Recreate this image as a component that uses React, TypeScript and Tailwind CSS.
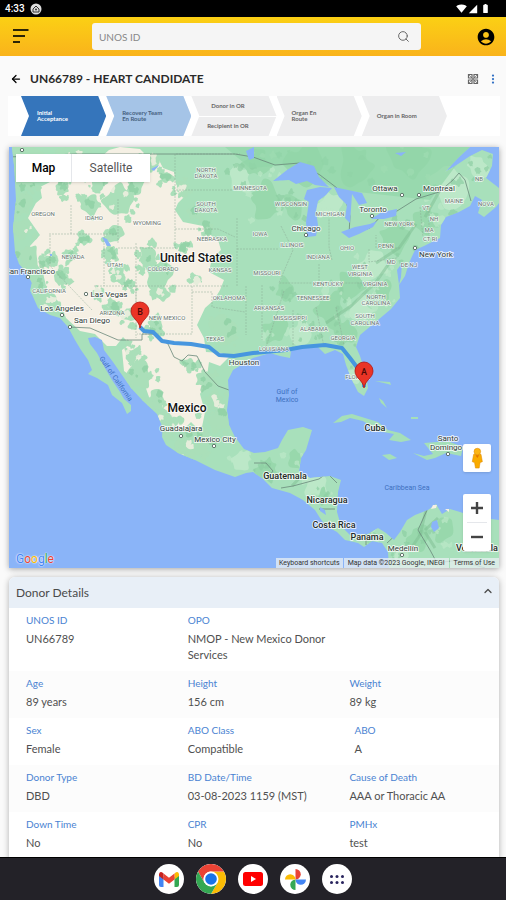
import React from "react";
import { ArrowLeft, ChevronUp, MoreVertical, Search } from "lucide-react";
import { MdAccountCircle, MdBatteryFull, MdSignalCellular4Bar, MdSignalWifi4Bar } from "react-icons/md";

type Point = [number, number];

function noise(n: number): number {
  return Math.abs(Math.sin(n * 12.9898) * 43758.5453) % 1;
}

/* Irregular rounded blotch around a centre, stable for a given seed. */
function patch(x: number, y: number, r: number, seed: number): string {
  const pts: Point[] = [];
  for (let i = 0; i < 14; i++) {
    const d = r * (0.45 + noise(seed * 3.1 + i * 7.7) * 0.75);
    const a = (i / 14) * Math.PI * 2;
    pts.push([x + Math.cos(a) * d, y + Math.sin(a) * d * 1.1]);
  }
  const mid = (i: number): string => {
    const [a, b] = [pts[i % 14], pts[(i + 1) % 14]];
    return `${((a[0] + b[0]) / 2).toFixed(1)} ${((a[1] + b[1]) / 2).toFixed(1)}`;
  };
  return `M${mid(13)}` + pts.map(([a, b], i) => `Q${a.toFixed(1)} ${b.toFixed(1)} ${mid(i)}`).join("") + "Z";
}

/* Small flecks scattered over a disc. */
function flecks(x: number, y: number, r: number, seed: number, count: number): string {
  let d = "";
  for (let i = 0; i < count; i++) {
    const a = noise(seed + i * 5.3) * Math.PI * 2;
    const k = r * (0.3 + noise(seed * 2 + i * 9.1) * 1.1);
    d += patch(x + Math.cos(a) * k, y + Math.sin(a) * k, 1.5 + noise(seed + i) * 3, seed + i * 11);
  }
  return d;
}

const MAINLAND =
  "M12 147L14 165 16 200 13 228 15 252 19 264 27 273 32 283 30 290 38 308 50 315 60 318 68 327 75 340 81 350 88 360 92 370 88 374 97 378 108 385 112 395 122 403 127 414 131 411 131 405 124 399 120 392 112 380 105 368 97 353 90 344 88 338 95 337 102 340 104 350 113 362 122 375 131 388 143 401 157 414 163 428 162 437 166 445 178 453 195 460 215 470 235 477 246 473 253 472 262 478 272 488 290 493 303 500 315 510 320 518 326 526 337 532 345 540 358 543 364 547 372 541 382 543 388 552 389 568 499 568 499 520 475 517 460 512 450 509 442 514 436 504 428 510 415 515 407 520 400 532 394 540 386 533 378 528 368 534 350 535 341 526 337 512 338 492 341 480 330 476 310 478 299 471 301 458 306 450 312 430 303 427 288 430 282 440 278 448 265 452 254 453 244 449 235 437 229 425 227 410 229 395 228 380 233 370 243 364 253 358 270 353 280 356 290 358 291 351 300 348 318 347 325 354 335 350 343 354 346 365 352 380 358 392 364 396 368 388 366 375 360 356 356 347 360 335 366 330 378 320 391 309 400 298 399 285 405 276 409 263 415 250 424 246 440 238 441 225 446 217 459 212 470 206 475 196 482 200 478 213 484 217 496 207 499 203 499 188 486 178 492 166 493 154 482 150 470 156 452 168 445 172 458 158 470 147Z";

const ARID =
  "M109 150L120 147 140 149 146 155 158 158 163 168 174 172 176 184 185 196 178 203 175 210 183 222 203 226 209 234 218 240 221 250 212 258 209 272 224 280 220 290 214 300 205 308 197 325 204 338 206 352 222 353 229 357 220 366 209 362 206 383 200 394 205 412 201 432 191 422 182 431 173 430 167 411 156 402 149 397 142 377 131 376 124 371 122 350 130 344 123 337 116 346 107 346 95 334 80 331 66 318 60 303 47 290 43 273 34 260 30 246 40 235 28 218 36 203 42 198 40 187 50 182 48 170 60 178 77 176 94 166 100 158Z";

const FOREST: [number, number, number][] = [
  [25, 155, 20], [25, 180, 12], [22, 205, 12], [22, 230, 12], [28, 257, 13], [37, 281, 9], [75, 160, 22], [100, 178, 14],
  [90, 204, 11], [118, 200, 16], [115, 235, 9], [135, 185, 9], [150, 163, 9], [166, 177, 7], [111, 254, 7],
  [119, 275, 9], [147, 257, 11], [159, 275, 14], [162, 293, 9], [155, 327, 8], [115, 307, 8], [130, 314, 10], [47, 262, 8],
  [61, 278, 8], [49, 302, 9], [71, 256, 6], [83, 240, 5], [131, 356, 11], [140, 375, 13], [157, 400, 11], [168, 424, 14],
  [190, 365, 7], [205, 380, 10], [215, 401, 11], [219, 420, 15], [199, 443, 17], [186, 449, 12], [183, 248, 6], [62, 188, 8],
  [182, 189, 8], [196, 214, 7], [208, 228, 6], [196, 281, 6], [222, 330, 15], [131, 284, 6], [97, 293, 5],
];

const WOODS: [number, number, number][] = [
  [240, 178, 15], [267, 201, 20], [292, 207, 12], [330, 205, 15], [355, 165, 22], [410, 160, 25], [448, 188, 21], [426, 220, 16],
  [395, 240, 18], [373, 265, 17], [350, 286, 19], [330, 309, 18], [302, 334, 15], [276, 331, 15], [286, 289, 12], [362, 311, 14],
  [300, 164, 21], [256, 164, 16], [477, 165, 13], [297, 458, 10], [267, 469, 13], [315, 486, 14], [419, 538, 12], [443, 530, 12],
  [403, 556, 10], [371, 537, 7], [323, 496, 8], [242, 459, 11], [345, 333, 12], [383, 291, 11], [352, 377, 8],
];

const STATES: [string, number, number][] = [
  ["OREGON", 43, 216], ["IDAHO", 94, 220], ["WYOMING", 147, 225], ["NEVADA", 73, 259], ["UTAH", 115, 267],
  ["COLORADO", 163, 271], ["NEBRASKA", 212, 241], ["KANSAS", 220, 272], ["CALIFORNIA", 49, 293], ["ARIZONA", 112, 315],
  ["NEW MEXICO", 167, 320], ["OKLAHOMA", 229, 300], ["TEXAS", 215, 341], ["NORTH", 206, 172], ["DAKOTA", 206, 178],
  ["SOUTH", 206, 206], ["DAKOTA", 206, 212], ["MINNESOTA", 250, 190], ["WISCONSIN", 291, 206], ["MICHIGAN", 330, 216],
  ["IOWA", 260, 236], ["ILLINOIS", 292, 247], ["INDIANA", 318, 259], ["OHIO", 347, 250], ["MISSOURI", 267, 275],
  ["WEST", 360, 269], ["VIRGINIA", 360, 276], ["KENTUCKY", 328, 286], ["VIRGINIA", 375, 286], ["TENNESSEE", 313, 300],
  ["NORTH", 376, 299], ["CAROLINA", 376, 305], ["ARKANSAS", 269, 310], ["MISSISSIPPI", 290, 320], ["SOUTH", 365, 318],
  ["CAROLINA", 365, 325], ["ALABAMA", 314, 331], ["GEORGIA", 343, 340], ["LOUISIANA", 274, 351], ["FLORIDA", 357, 379],
  ["NEW YORK", 399, 226], ["PENN", 386, 248], ["MAINE", 454, 203], ["VT", 426, 210], ["NH", 434, 221], ["MA", 429, 232],
  ["CT RI", 430, 241], ["MD", 391, 264], ["DE NJ", 409, 267], ["NB", 479, 181], ["NOVA", 486, 206],
];

const CITIES: [string, number, number][] = [
  ["San Francisco", 30, 274], ["Las Vegas", 109, 297], ["Los Angeles", 62, 311], ["San Diego", 92, 323], ["Houston", 244, 365],
  ["Guadalajara", 181, 431], ["Mexico City", 215, 442], ["Chicago", 306, 231], ["Toronto", 373, 212], ["Ottawa", 385, 191],
  ["Montreal", 439, 191], ["New York", 436, 257], ["Santo", 448, 441], ["Domingo", 446, 450], ["Medellín", 403, 551],
];

const COUNTRIES: [string, number, number][] = [
  ["Cuba", 375, 431], ["Guatemala", 285, 479], ["Nicaragua", 327, 503], ["Costa Rica", 334, 528], ["Panama", 367, 540], ["Venezuela", 477, 551],
];

const DOTS: Point[] = [
  [28, 277], [86, 294], [62, 315], [70, 327], [181, 436], [214, 446], [22, 150], [306, 235], [372, 216], [402, 195], [419, 195], [415, 248], [448, 454], [402, 555],
];

const WATER = "#8ab4f8";

function Pin({ x, y, letter }: { x: number; y: number; letter: string }) {
  return (
    <g transform={`translate(${x} ${y})`}>
      <path d="M0 0C-1-8-9-10-9-17A9 9 0 1 1 9-17C9-10 1-8 0 0Z" fill="#ea3426" stroke="#b31412" strokeWidth="0.8" />
      <text y="-13" textAnchor="middle" fontSize="9" fontWeight="500" fill="#4b0905">{letter}</text>
    </g>
  );
}

function MapDrawing() {
  return (
    <svg viewBox="9 147 490 421" preserveAspectRatio="xMidYMid slice" className="block h-full w-full font-[Roboto,sans-serif]" role="img" aria-label="Route from Florida to New Mexico">
      <defs>
        <clipPath id="land"><path d={MAINLAND} /></clipPath>
      </defs>
      <rect x="9" y="147" width="490" height="421" fill={WATER} />
      <path d={MAINLAND} fill="#a8e0bb" />
      <g clipPath="url(#land)">
        {WOODS.map(([x, y, r], i) => <path key={i} d={patch(x, y, r, i + 40)} fill={i % 3 ? "#98d8ac" : "#bce8c8"} />)}
        {WOODS.map(([x, y, r], i) => <path key={i} d={flecks(x, y, r, i + 20, 6)} fill={i % 2 ? "#bce8c8" : "#8dcfa3"} opacity="0.7" />)}
        <path d="M225 147H470L430 200 340 190 285 165 250 168Z" fill="#92d6a8" opacity="0.7" />
        <path d={ARID} fill="#f5f0e4" />
        {FOREST.map(([x, y, r], i) => <path key={i} d={patch(x, y, r, i + 3)} fill="#aadfb9" />)}
        {FOREST.map(([x, y, r], i) => <path key={i} d={flecks(x, y, r, i + 5, 8)} fill="#aadfb9" />)}
        {FOREST.map(([x, y, r], i) => <path key={i} d={flecks(x, y, r * 0.6, i + 60, 3)} fill={i % 3 ? "#8fd0a4" : "#f5f0e4"} opacity="0.8" />)}
        <path d="M390 262L376 282 351 306 326 323M416 224L399 248 376 263M440 190L425 217M306 471L292 486M425 530L438 518M426 510L420 535 410 550M435 548L425 532" fill="none" stroke="#7dbd92" strokeWidth="3" opacity="0.5" />
        <path d="M176 154H240M176 190H233M175 229H218L235 237M118 248H176M49 234H118M71 205V234M118 199V243M175 154V248M104 234V286M136 243V321M94 286H228M136 286V338M192 286V334H137M192 292H212V307L245 312M237 218V286M237 249H278M246 286V335M262 285V340M281 226L293 250 279 283H362M284 291L266 347M293 310V350M316 307L324 347M336 307L344 345M319 264V282M332 260L329 247V218M369 249V262L397 258M400 248H376V235M420 207L423 237M429 205V240M50 235V266L92 310" fill="none" stroke="#8aa694" strokeWidth="0.7" strokeDasharray="2 1" opacity="0.65" />
        <path d="M9 157 75 154H235L253 157 275 165 300 163 320 175 337 188 346 201 350 216 349 235 370 228 381 216 397 211 416 199 439 192 453 180 459 173 465 180 471 201" fill="none" stroke="#69887a" strokeWidth="0.8" />
        <path d="M69 327 90 328 118 340H142V334H153L168 344 174 357 182 361 188 355 197 356 205 372 218 386 229 390M254 463H266L273 471 266 480M281 488 293 486 319 479 327 473 337 483M319 509H335M366 532V545M427 510 418 530 430 550 437 563 458 560 485 568M399 532 387 543" fill="none" stroke="#69887a" strokeWidth="0.8" />
      </g>
      <g fill={WATER}>
        <path d="M273 181L287 170 300 162 314 166 319 177 329 187 315 185 307 181 296 184 289 180Z" />
        <path d="M307 190L320 187 332 188 326 195 318 201 316 211 318 225 316 236 307 237 306 222 309 202 304 199Z" />
        <path d="M334 187L348 190 362 193 367 203 359 205 352 194 351 209 350 223 345 218 347 205 339 197Z" />
        <path d="M341 232L355 227 370 224 377 221 373 227 359 234 349 238Z" />
        <path d="M371 219L382 212 397 209 396 216 384 219Z" />
        <path d="M102 237L107 239 111 246 107 246Z" />
        <path d="M397 270L402 263 401 277 399 285Z" />
        <path d="M432 522L437 520 439 528 434 532 431 527Z" />
        <path d="M320 507L325 510 326 515 320 511Z" />
        <path d="M151 169L159 165 154 171ZM50 254H52V256H50ZM246 151L254 147 254 158 249 160ZM395 153L406 152 401 156Z" />
      </g>
      <g fill="#a5dfb9">
        <path d="M333 423L342 416 352 414 365 418 378 422 388 430 400 433 411 440 401 442 389 440 394 434 378 431 363 421 350 418 341 422Z" />
        <path d="M382 455L390 454 397 458 389 460Z" />
        <path d="M413 453L424 456 433 454 424 443 437 442 450 442 463 447 461 456 446 453 435 458 427 460Z" />
        <path d="M379 398L383 401 387 408 381 403ZM411 417H418V419H411ZM375 381L390 382 391 385 388 384ZM467 452H474V455H467Z" />
      </g>
      <path d="M433 505L437 505 436 508 431 509ZM445 509L449 509 449 512Z" fill="#f5f0e4" />
      <path d="M140 327L144 331 153 332 162 341 174 343 191 344 209 347 219 355 234 356 253 353 286 350 302 347 325 345 342 348 350 358 356 366 364 378V387" fill="none" stroke="#4796df" strokeWidth="4" strokeLinejoin="round" />
      <g fill="#fff" stroke="#52675e" strokeWidth="0.9">
        {DOTS.map(([x, y]) => <circle key={`${x}-${y}`} cx={x} cy={y} r="1.7" />)}
      </g>
      <g textAnchor="middle" stroke="#fff" strokeOpacity="0.75" paintOrder="stroke" strokeLinejoin="round">
        <g fontSize="6" fill="#68736e" strokeWidth="1.5">
          {STATES.map(([name, x, y], i) => <text key={i} x={x} y={y}>{name}</text>)}
        </g>
        <g fontSize="8" fill="#333d38" strokeWidth="2">
          {CITIES.map(([name, x, y]) => <text key={name} x={x} y={y}>{name}</text>)}
        </g>
        <g fontSize="9" fontWeight="500" fill="#252b28" strokeWidth="2">
          {COUNTRIES.map(([name, x, y]) => <text key={name} x={x} y={y}>{name}</text>)}
        </g>
        <g fontSize="12" fontWeight="500" fill="#111" strokeWidth="2">
          <text x="196" y="262">United States</text>
          <text x="187" y="412">Mexico</text>
        </g>
      </g>
      <g fontSize="7" fill="#3d70bf" textAnchor="middle">
        <text x="287" y="394">Gulf of</text>
        <text x="287" y="402">Mexico</text>
        <text x="407" y="490">Caribbean Sea</text>
        <text transform="translate(114 380) rotate(55)">Gulf of California</text>
      </g>
      <Pin x={140} y={328} letter="B" />
      <Pin x={364} y={388} letter="A" />
    </svg>
  );
}

function MapCard() {
  return (
    <section className="relative aspect-[490/421] shadow-[0_1px_6px_rgba(0,0,0,0.35)]">
      <MapDrawing />
      <div className="absolute left-[7px] top-[7px] flex h-7 bg-white text-[12px] text-[#555] font-[Roboto,sans-serif] shadow-sm">
        <button className="w-14 border-r border-gray-200 font-medium text-black">Map</button>
        <button className="w-[78px]">Satellite</button>
      </div>
      <button aria-label="Street view" className="absolute bottom-24 right-2 flex size-7 items-center justify-center rounded-xs bg-white shadow-sm">
        <svg viewBox="0 0 16 24" className="h-[22px]">
          <path d="M4 8H12L13.500 16 11 17 10 23H6L5 17 2.500 16Z" fill="#f9ab00" stroke="#e08a00" strokeWidth="0.6" />
          <path d="M6 9L8 12 10 9Z" fill="#e37400" />
          <circle cx="8" cy="5" r="3.600" fill="#fbb514" stroke="#e08a00" strokeWidth="0.6" />
        </svg>
      </button>
      <div className="absolute bottom-[17px] right-2 flex w-7 flex-col items-center rounded-xs bg-white shadow-sm">
        <button aria-label="Zoom in" className="flex h-7 w-full items-center justify-center">
          <svg viewBox="0 0 12 12" className="size-3"><path d="M6 0V12M0 6H12" stroke="#444" strokeWidth="2.400" /></svg>
        </button>
        <span className="h-px w-5 bg-gray-200" />
        <button aria-label="Zoom out" className="flex h-7 w-full items-center justify-center">
          <svg viewBox="0 0 12 12" className="size-3"><path d="M0 6H12" stroke="#444" strokeWidth="2.400" /></svg>
        </button>
      </div>
      <div aria-label="Google" className="absolute bottom-0 left-[7px] text-[12px] leading-[18px] font-[Roboto,sans-serif] [text-shadow:0_0_1px_white,0_0_2px_white]">
        <span className="text-[#4285f4]">G</span><span className="text-[#ea4335]">o</span><span className="text-[#fbbc05]">o</span><span className="text-[#4285f4]">g</span><span className="text-[#34a853]">l</span><span className="text-[#ea4335]">e</span>
      </div>
      <div className="absolute bottom-0 right-0 flex h-[10px] items-center gap-px whitespace-nowrap text-[7px] leading-[10px] text-[#333] font-[Roboto,sans-serif]">
        <button className="bg-[#e9f0f3]/75 px-[3px]">Keyboard shortcuts</button>
        <span className="bg-[#e9f0f3]/75 px-1">Map data ©2023 Google, INEGI</span>
        <a href="#terms" className="bg-[#e9f0f3]/75 px-1">Terms of Use</a>
      </div>
    </section>
  );
}

const STEP =
  "flex w-1/5 flex-col justify-center [clip-path:polygon(0_0,calc(100%-8px)_0,100%_50%,calc(100%-8px)_100%,0_100%,8px_50%)]";

function Steps() {
  return (
    <ol className="flex h-10 shrink-0 bg-white pl-[13px] pr-[53px] text-[6px] font-bold leading-[6px] text-[#666]">
      <li className={`${STEP} bg-[#3575bb] pl-4 text-white`}>Initial<br />Acceptance</li>
      <li className={`${STEP} bg-[#a5c4e7] pl-4 text-[#46617f]`}>Recovery Team<br />En Route</li>
      <li className={`${STEP} text-center`}>
        <span className="flex flex-1 items-center justify-center bg-[#ededee] pr-3">Donor in OR</span>
        <span className="h-px bg-white" />
        <span className="flex flex-1 items-center justify-center bg-[#ededee] pr-3">Recipient in OR</span>
      </li>
      <li className={`${STEP} bg-[#ededee] pl-[15px]`}>Organ En<br />Route</li>
      <li className={`${STEP} bg-[#ededee] pl-[15px]`}>Organ in Room</li>
    </ol>
  );
}

type Field = { label: string; value: string; inset?: boolean };

const ROWS: Field[][] = [
  [{ label: "UNOS ID", value: "UN66789" }, { label: "OPO", value: "NMOP - New Mexico Donor Services" }],
  [{ label: "Age", value: "89 years" }, { label: "Height", value: "156 cm" }, { label: "Weight", value: "89 kg" }],
  [{ label: "Sex", value: "Female" }, { label: "ABO Class", value: "Compatible" }, { label: "ABO", value: "A", inset: true }],
  [{ label: "Donor Type", value: "DBD" }, { label: "BD Date/Time", value: "03-08-2023 1159 (MST)" }, { label: "Cause of Death", value: "AAA or Thoracic AA" }],
  [{ label: "Down Time", value: "No" }, { label: "CPR", value: "No" }, { label: "PMHx", value: "test" }],
];

function DonorDetails() {
  return (
    <section className="mt-[9px] rounded-t-md bg-white shadow-[0_1px_6px_rgba(0,0,0,0.3)]">
      <h2>
        <button className="flex h-[31px] w-full items-center justify-between rounded-t-md bg-[#e8eff7] pl-[7px] pr-[5px] text-[12px] text-[#4a4a4a]">
          Donor Details
          <ChevronUp className="mb-1 size-3" strokeWidth={2.5} />
        </button>
      </h2>
      {ROWS.map((row, i) => (
        <dl key={i} className="grid grid-cols-[33%_33%_1fr] pb-2 pt-1 text-[11px] leading-4 odd:bg-[#fcfcfc]">
          {row.map((f) => (
            <div key={f.label} className={f.inset ? "pl-[22px]" : "pl-[17px]"}>
              <dt className="mb-[3px] text-[10px] leading-4 text-[#4a83d2]">{f.label}</dt>
              <dd className="text-[#505050]">{f.value}</dd>
            </div>
          ))}
        </dl>
      ))}
    </section>
  );
}

function Dock() {
  const tile = "flex size-[30px] items-center justify-center overflow-hidden rounded-full bg-white";
  return (
    <nav aria-label="Apps" className="flex h-[43px] shrink-0 items-center justify-center gap-3 border-t border-black bg-[#232228]">
      <button aria-label="Gmail" className={tile}>
        <svg viewBox="0 0 20 15" className="w-5">
          <path d="M0 2V13Q0 15 2 15H4.500V5Z" fill="#4285f4" />
          <path d="M15.500 15H18Q20 15 20 13V2L15.500 5Z" fill="#34a853" />
          <path d="M15.500 1.500V7.500L20 4V2Q19-1.500 15.500 1.500Z" fill="#fbbc04" />
          <path d="M4.500 7.500V1.500L10 5.700 15.500 1.500V7.500L10 11.700Z" fill="#ea4335" />
          <path d="M0 2V4L4.500 7.500V1.500Q1-1.500 0 2Z" fill="#c5221f" />
        </svg>
      </button>
      <button aria-label="Chrome" className={tile}>
        <svg viewBox="0 0 30 30" className="size-[30px]">
          <path d="M15 7.500H28A15 15 0 0 1 15 30L21.500 18.700Z" fill="#fbbc04" />
          <path d="M2 7.500A15 15 0 0 1 28 7.500H15A7.500 7.500 0 0 0 8.500 18.700Z" fill="#ea4335" />
          <path d="M2 7.500L8.500 18.700 15 22.500 21.500 18.700 15 30A15 15 0 0 1 2 7.500Z" fill="#34a853" />
          <circle cx="15" cy="15" r="7.500" fill="#fff" />
          <circle cx="15" cy="15" r="5.800" fill="#1a73e8" />
        </svg>
      </button>
      <button aria-label="YouTube" className={tile}>
        <svg viewBox="0 0 20 14" className="w-5"><rect width="20" height="14" rx="2.500" fill="#f00" /><path d="M8 4V10L13 7Z" fill="#fff" /></svg>
      </button>
      <button aria-label="Photos" className={tile}>
        <svg viewBox="0 0 20 20" className="size-[21px]">
          <path d="M10 0A5 5 0 0 1 10 10Z" fill="#ea4335" />
          <path d="M20 10A5 5 0 0 1 10 10Z" fill="#4285f4" />
          <path d="M10 20A5 5 0 0 1 10 10Z" fill="#34a853" />
          <path d="M0 10A5 5 0 0 1 10 10Z" fill="#fbbc04" />
        </svg>
      </button>
      <button aria-label="All apps" className={tile}>
        <svg viewBox="0 0 14 9" className="w-[14px]" fill="#29245e">
          {[1.5, 7, 12.5].map((x) => <g key={x}><circle cx={x} cy="1.500" r="1.500" /><circle cx={x} cy="7.500" r="1.500" /></g>)}
        </svg>
      </button>
    </nav>
  );
}

export default function App() {
  return (
    <div className="flex h-screen flex-col bg-[#fafafa] font-[Lato,sans-serif]">
      <div className="flex h-[17px] shrink-0 items-center bg-black px-[5px] text-[10px] text-white">
        <span className="font-medium font-[Roboto,sans-serif]">4:33</span>
        <svg viewBox="0 0 12 12" className="ml-[5px] size-3"><circle cx="6" cy="6" r="5.500" fill="#ddd" /><path d="M3 6L6 3 9 6V9H3Z" fill="none" stroke="#333" /><circle cx="6" cy="6.500" r="1" fill="#333" /></svg>
        <span className="ml-auto mr-[10px] flex items-center gap-px text-[11px]"><MdSignalWifi4Bar /><MdSignalCellular4Bar className="size-[10px]" /><MdBatteryFull className="ml-px" /></span>
      </div>
      <header className="flex h-[39px] shrink-0 items-center bg-linear-to-b from-[#fbd014] to-[#f9b31b] pl-[13px] pr-[10px]">
        <button aria-label="Menu" className="mr-[63px]">
          <svg viewBox="0 0 16 16" className="size-4"><path d="M0 1H15.500M0 7H12M0 13H7" stroke="#2b2406" strokeWidth="2.200" /></svg>
        </button>
        <label className="flex h-[27px] min-w-0 flex-1 items-center rounded-[3px] bg-[#f5f5f5] px-[7px]">
          <input aria-label="Search by UNOS ID" placeholder="UNOS ID" className="h-full min-w-0 flex-1 bg-transparent text-[10px] outline-none placeholder:text-[#888]" />
          <Search className="mr-1 size-[13px] text-[#666]" strokeWidth={1.8} />
        </label>
        <button aria-label="Account" className="ml-[55px] text-xl text-black"><MdAccountCircle /></button>
      </header>
      <main className="flex min-h-0 flex-1 flex-col overflow-hidden pl-2 pr-[6px]">
        <div className="flex h-10 shrink-0 items-center pr-px pt-[6px]">
          <button aria-label="Back" className="ml-[2px] mr-2"><ArrowLeft className="size-3 text-black" strokeWidth={2.5} /></button>
          <h1 className="text-[12px] font-bold text-[#2a2a2a]">UN66789 - HEART CANDIDATE</h1>
          <button aria-label="Grid view" className="ml-auto">
            <svg viewBox="0 0 12 12" className="size-3 text-[#666]" fill="none" stroke="currentColor" strokeWidth="1.200">
              <path d="M1.500 1.500H5V5H1.500ZM7 1.500H10.500V5H7ZM1.500 7H5V10.500H1.500ZM7 7H10.500V10.500H7Z" />
              <path d="M1.500 1.500L10.500 10.500M10.500 1.500L1.500 10.500" strokeWidth="0.7" />
            </svg>
          </button>
          <button aria-label="More" className="ml-2"><MoreVertical className="size-3 text-[#2f6fc4]" strokeWidth={2.5} /></button>
        </div>
        <Steps />
        <div className="flex flex-col px-px pt-[11px]">
          <MapCard />
          <DonorDetails />
        </div>
      </main>
      <Dock />
    </div>
  );
}
